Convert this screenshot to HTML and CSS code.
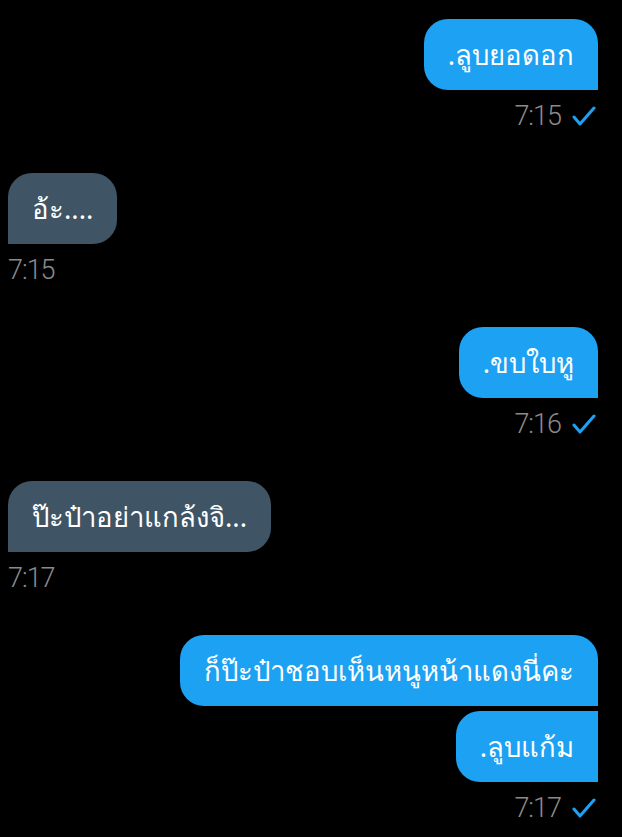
FILE: index.html
```html
<!DOCTYPE html>
<html lang="th">
<head>
    <meta charset="UTF-8">
    <meta name="viewport" content="width=device-width, initial-scale=1.0">
    <title>แชท</title>
    <link rel="stylesheet" href="styles.css">
</head>
<body>
    <div class="chat">
        <!-- ข้อความขาออก -->
        <div class="msg out">
            <div class="bubble">.ลูบยอดอก</div>
            <div class="meta">
                <span class="time">7:15</span>
                <svg class="tick" width="24" height="20" viewBox="0 0 24 20"><polyline points="2,11 8,18 22,2" fill="none" stroke="#1da1f2" stroke-width="3" stroke-linecap="round" stroke-linejoin="round"/></svg>
            </div>
        </div>

        <!-- ข้อความขาเข้า -->
        <div class="msg in">
            <div class="bubble">อ้ะ....</div>
            <div class="meta">
                <span class="time">7:15</span>
            </div>
        </div>

        <div class="msg out">
            <div class="bubble">.ขบใบหู</div>
            <div class="meta">
                <span class="time">7:16</span>
                <svg class="tick" width="24" height="20" viewBox="0 0 24 20"><polyline points="2,11 8,18 22,2" fill="none" stroke="#1da1f2" stroke-width="3" stroke-linecap="round" stroke-linejoin="round"/></svg>
            </div>
        </div>

        <div class="msg in">
            <div class="bubble">ป๊ะป๋าอย่าแกล้งจิ...</div>
            <div class="meta">
                <span class="time">7:17</span>
            </div>
        </div>

        <div class="msg out">
            <div class="bubble first">ก็ป๊ะป๋าชอบเห็นหนูหน้าแดงนี่คะ</div>
            <div class="bubble next">.ลูบแก้ม</div>
            <div class="meta">
                <span class="time">7:17</span>
                <svg class="tick" width="24" height="20" viewBox="0 0 24 20"><polyline points="2,11 8,18 22,2" fill="none" stroke="#1da1f2" stroke-width="3" stroke-linecap="round" stroke-linejoin="round"/></svg>
            </div>
        </div>
    </div>
</body>
</html>
```

FILE: styles.css
```css
html, body{
    margin: 0;
    padding: 0;
    background: #000;
}
.chat{
    width: 622px;
    height: 837px;
    box-sizing: border-box;
    padding: 19px 24px 0 8px;
    overflow: hidden;
    font-family: "Noto Sans", sans-serif;
}
.msg{
    display: flex;
    flex-direction: column;
    margin-bottom: 40px;
}
.out{
    align-items: flex-end;
}
.in{
    align-items: flex-start;
}
.bubble{
    box-sizing: border-box;
    height: 71px;
    padding: 0 24px;
    display: flex;
    align-items: center;
    font-size: 27.5px;
    color: #fff;
    border-radius: 24px;
    white-space: nowrap;
}
.out .bubble{
    background: #1da1f2;
    border-bottom-right-radius: 0;
}
.in .bubble{
    background: #3f5464;
    border-bottom-left-radius: 0;
}
/* 连续两条 */
.out .first{
    margin-bottom: 5px;
}
.out .next{
    border-top-right-radius: 0;
}
.meta{
    display: flex;
    align-items: center;
    gap: 11px;
    height: 34px;
    margin-top: 9px;
}
.time{
    font-family: Roboto, sans-serif;
    font-weight: 300;
    font-size: 27px;
    letter-spacing: -1px;
    color: #8b8b8b;
}
.tick{
    display: block;
    margin-right: 2px;
}
```
